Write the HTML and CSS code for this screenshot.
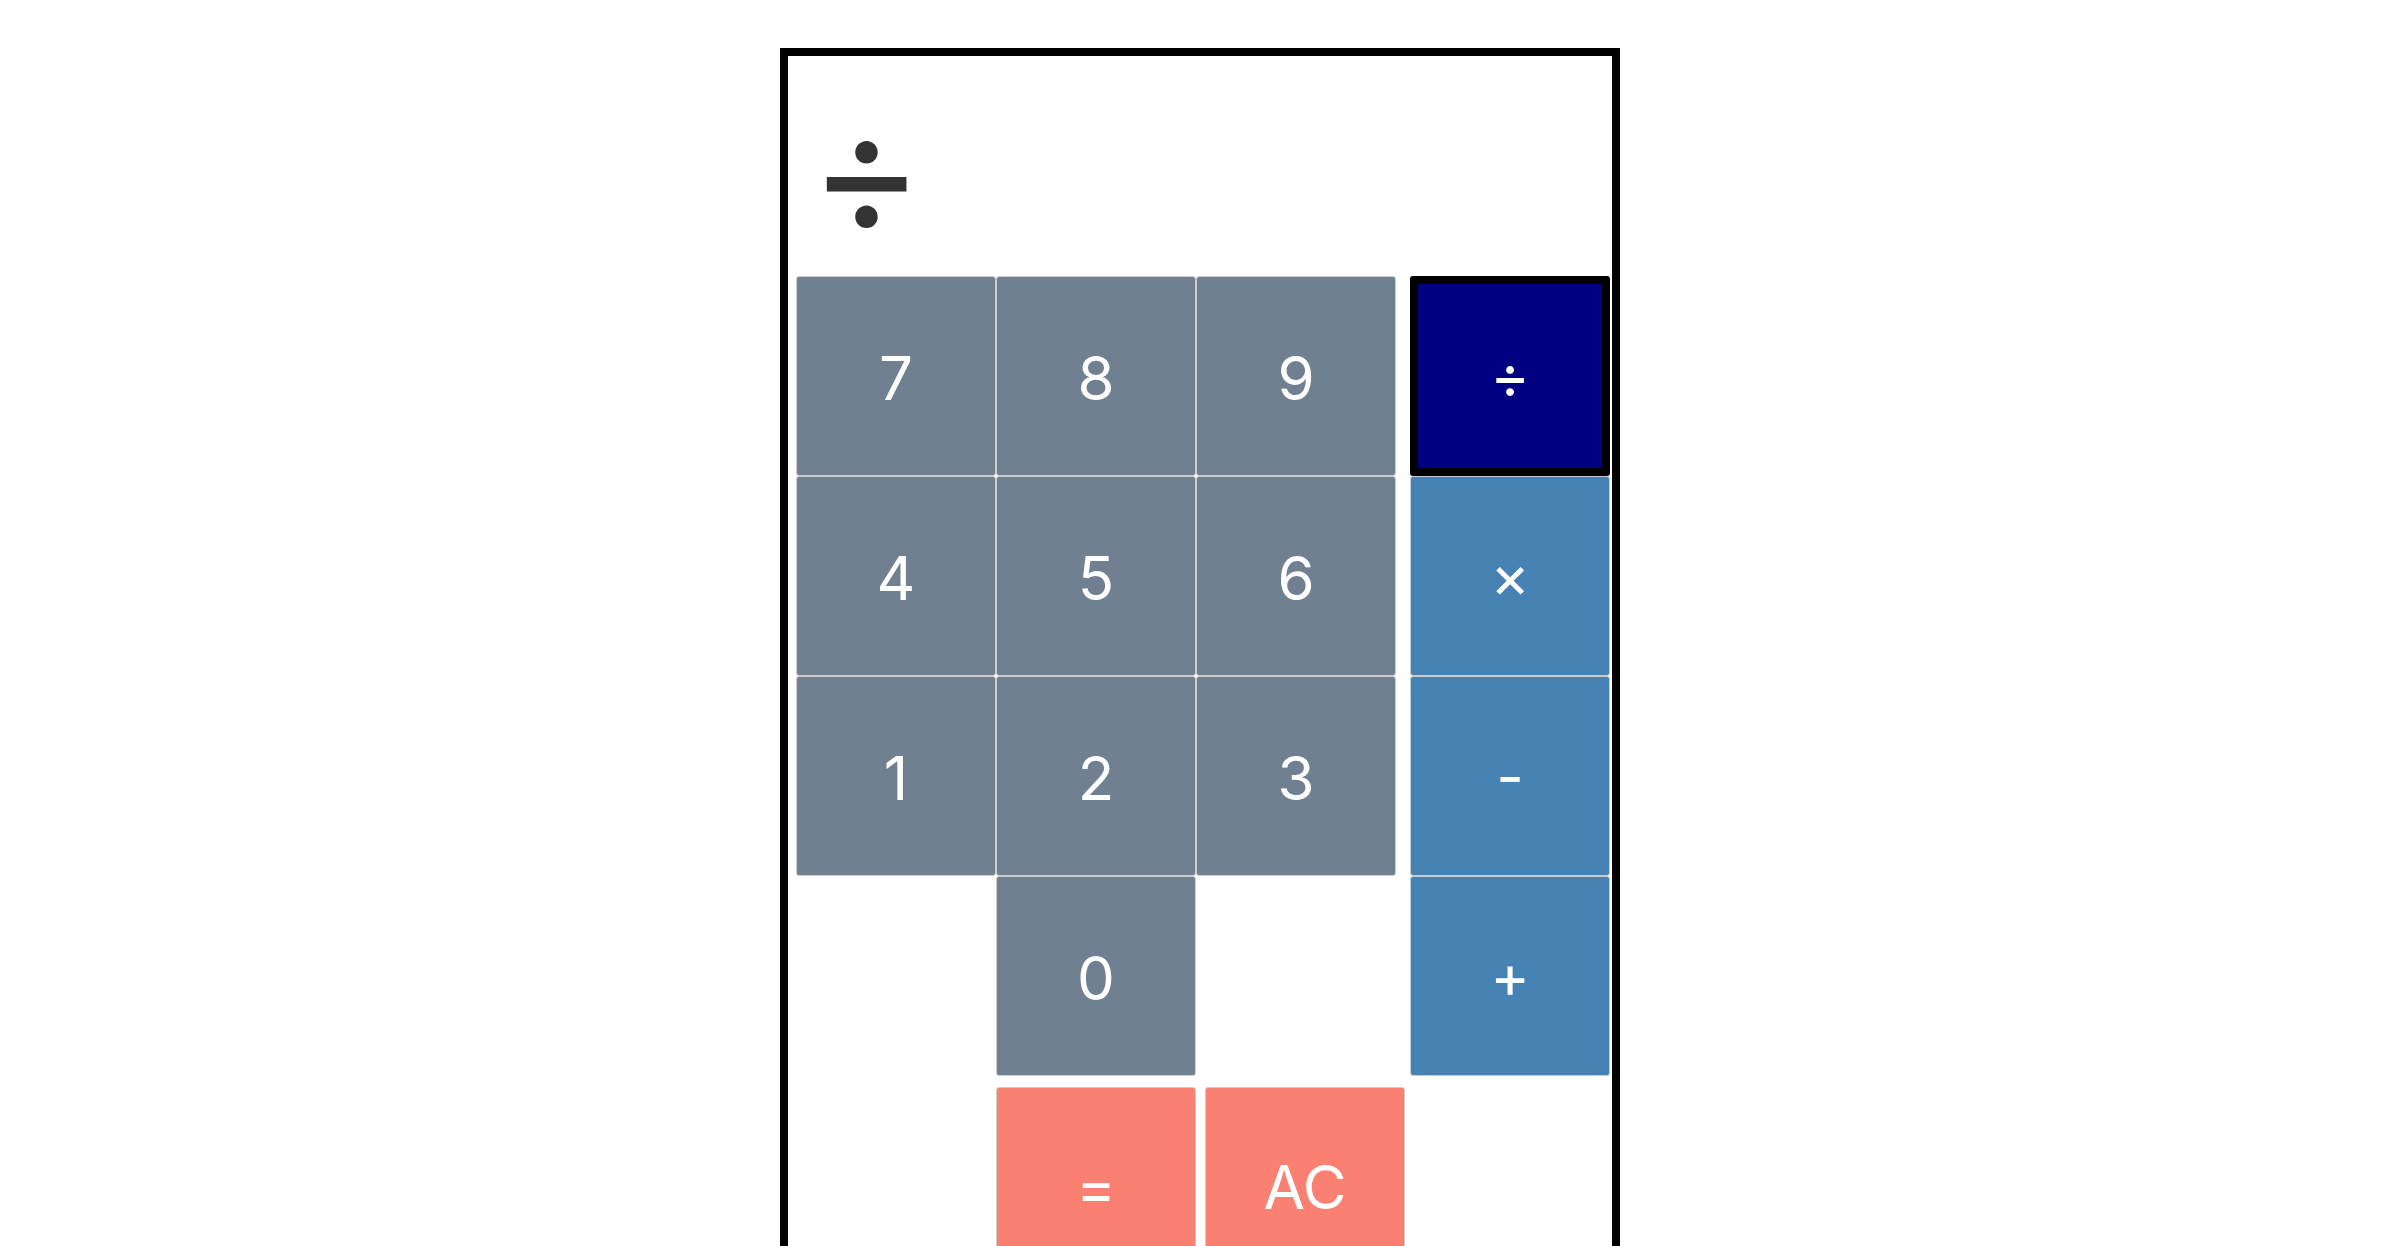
FILE: index.html
```html
<!DOCTYPE html>
<html lang="en">
<head>
  <meta charset="UTF-8" />
  <meta name="viewport" content="width=device-width, initial-scale=1.0" />
  <title>Calculator</title>
  <link rel="stylesheet" href="styles.css">
</head>
<body>
  <div id="calculator">
    <!-- current display -->
    <div id="display">÷</div>

    <div class="keys">
      <div class="numbers">
        <button class="key num">7</button>
        <button class="key num">8</button>
        <button class="key num">9</button>
        <button class="key num">4</button>
        <button class="key num">5</button>
        <button class="key num">6</button>
        <button class="key num">1</button>
        <button class="key num">2</button>
        <button class="key num">3</button>
        <button class="key num zero">0</button>
      </div>
      <div class="operators">
        <button class="key op selected">÷</button>
        <button class="key op">×</button>
        <button class="key op">-</button>
        <button class="key op">+</button>
      </div>
    </div>

    <div class="actions">
      <button class="key action">=</button>
      <button class="key action">AC</button>
    </div>
  </div>
</body>
</html>
```

FILE: styles.css
```css
/* Page */
html, body {
  margin: 0;
  padding: 0;
  background-color: #fff;
  font-family: Inter, "Liberation Sans", sans-serif;
}

/* Calculator frame */
#calculator {
  width: 814px;
  margin: 48px auto 0;
  padding: 0 2px 40px 8px;
  border: 8px solid #000;
}

#display {
  height: 220px;
  box-sizing: border-box;
  padding: 9px 0 0 13px;
  font-size: 174px;
  color: #333;
  line-height: normal;
}

/* Keypad */
.keys {
  display: flex;
  gap: 14px;
}
.numbers {
  display: grid;
  grid-template-columns: repeat(3, 200px);
  grid-auto-rows: 200px;
}
.numbers .zero { grid-column: 2; }
.operators {
  display: grid;
  grid-template-columns: 200px;
  grid-auto-rows: 200px;
}

.key {
  margin: 0;
  padding: 0;
  border: 1px solid #ccc;
  border-radius: 3px;
  color: #fff;
  font-family: Inter, "Liberation Sans", sans-serif;
  font-size: 60px;
  cursor: pointer;
}
.num {
  background-color: slategray;
  padding-top: 4px;
}
.op { background-color: steelblue; }
.op.selected {
  background-color: navy;
  border: 8px solid #000;
}
.action { background-color: salmon; }

.actions {
  display: flex;
  gap: 9px;
  margin-top: 11px;
  padding-left: 200px;
}
.actions .key {
  width: 200px;
  height: 200px;
}
```
